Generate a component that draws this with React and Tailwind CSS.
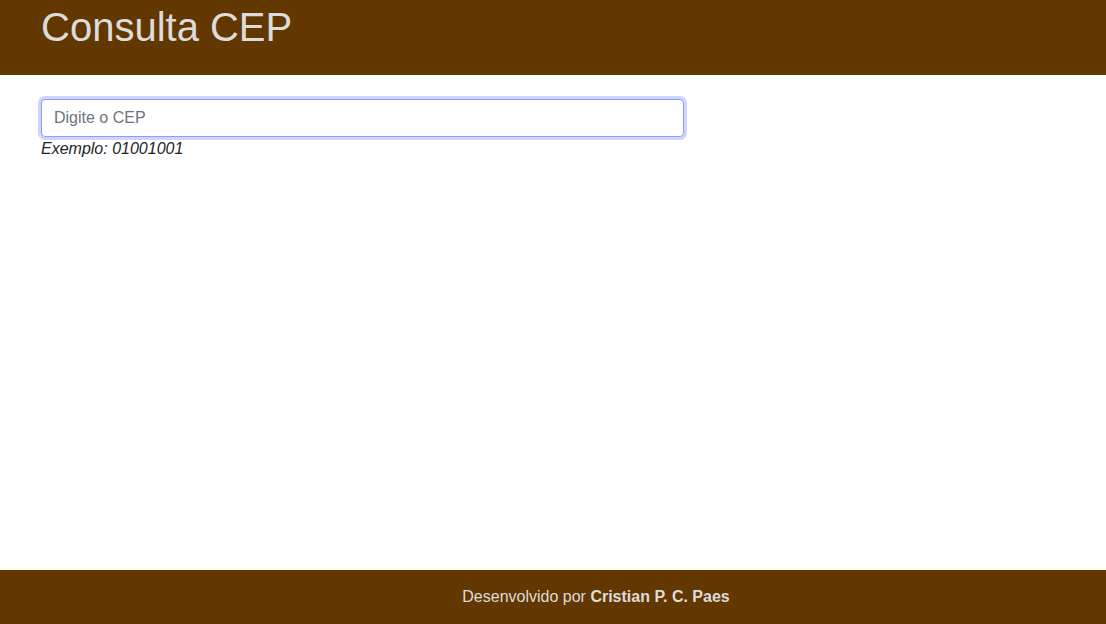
import React from "react";

export default function App() {
    return (
        <div className="flex flex-col h-screen bg-white" style={{ fontFamily: '"Liberation Sans", Arial, sans-serif' }}>
            {/* Header */}
            <header className="bg-[#633700] h-[75px] px-[41px] shrink-0">
                <h1 className="text-[40px] leading-[54px] text-[#dcdcdc] font-normal">Consulta CEP</h1>
            </header>

            {/* Main */}
            <main className="flex-1 px-[41px] pt-[24px]">
                <input
                    type="text"
                    autoFocus
                    placeholder="Digite o CEP"
                    className="block w-[643px] h-[38px] px-[12px] text-[16px] text-[#495057] placeholder:text-[#6c757d] bg-white border border-[#86a4f0] rounded-[4px] outline-none shadow-[0_0_0_3px_rgba(128,128,255,0.35)]"
                />
                <p className="italic text-[16px] leading-[24px] text-[#212529]">Exemplo: 01001001</p>
            </main>

            {/* Footer */}
            <footer className="bg-[#633700] h-[54px] shrink-0 flex items-center justify-center pl-[86px] text-[16px] text-[#dcdcdc]">
                <span>
                    Desenvolvido por <strong className="font-bold">Cristian P. C. Paes</strong>
                </span>
            </footer>
        </div>
    );
}
